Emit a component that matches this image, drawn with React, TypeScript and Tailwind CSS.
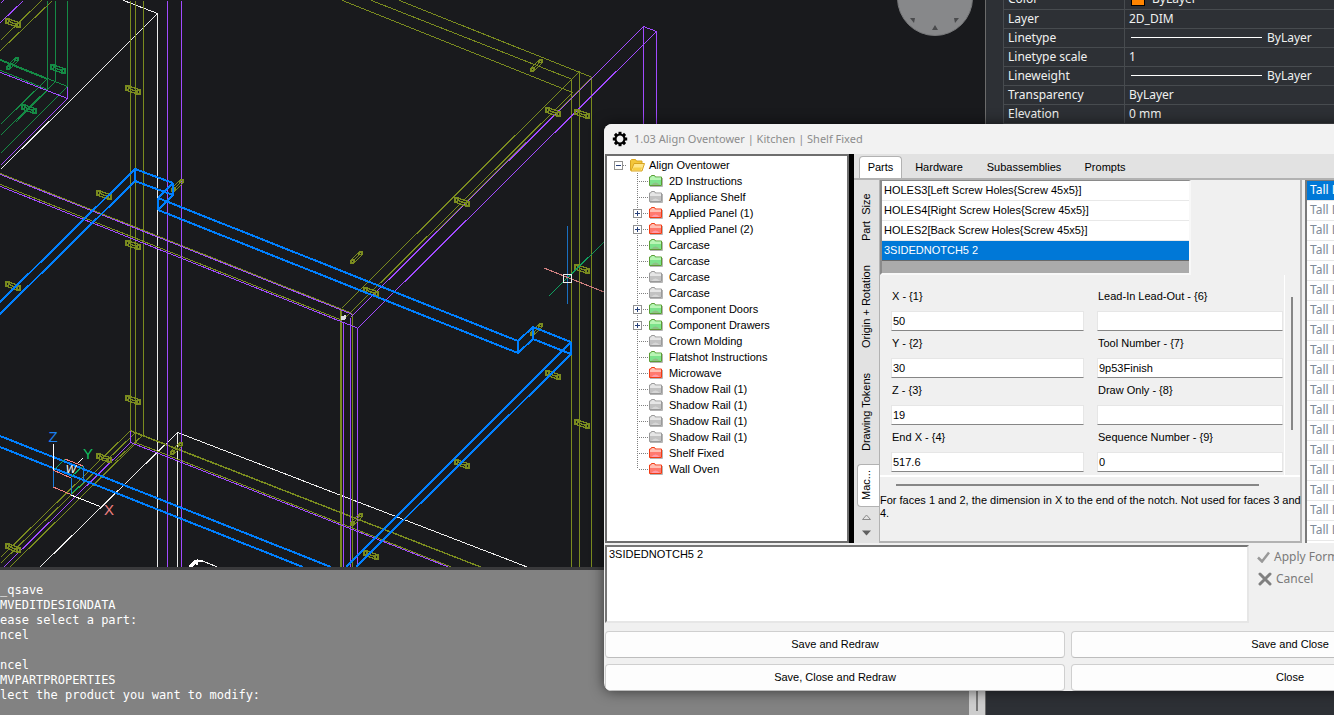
import type { ReactNode } from 'react';
import { clsx } from 'clsx';

type Tone = 'green' | 'gray' | 'red';
type Segment = [number, number, number, number];

const OLIVE = '#7a8b1f';
const PURPLE = '#a14bff';
const GREEN = '#158a45';

const treeItems: { label: string; tone: Tone; expandable?: boolean }[] = [
  { label: '2D Instructions', tone: 'green' },
  { label: 'Appliance Shelf', tone: 'gray' },
  { label: 'Applied Panel (1)', tone: 'red', expandable: true },
  { label: 'Applied Panel (2)', tone: 'red', expandable: true },
  { label: 'Carcase', tone: 'green' },
  { label: 'Carcase', tone: 'green' },
  { label: 'Carcase', tone: 'gray' },
  { label: 'Carcase', tone: 'gray' },
  { label: 'Component Doors', tone: 'green', expandable: true },
  { label: 'Component Drawers', tone: 'green', expandable: true },
  { label: 'Crown Molding', tone: 'gray' },
  { label: 'Flatshot Instructions', tone: 'green' },
  { label: 'Microwave', tone: 'red' },
  { label: 'Shadow Rail (1)', tone: 'gray' },
  { label: 'Shadow Rail (1)', tone: 'gray' },
  { label: 'Shadow Rail (1)', tone: 'gray' },
  { label: 'Shadow Rail (1)', tone: 'gray' },
  { label: 'Shelf Fixed', tone: 'red' },
  { label: 'Wall Oven', tone: 'red' },
];

const tokens = [
  'HOLES3[Left Screw Holes{Screw 45x5}]',
  'HOLES4[Right Screw Holes{Screw 45x5}]',
  'HOLES2[Back Screw Holes{Screw 45x5}]',
  '3SIDEDNOTCH5 2',
];

const fields = [
  { id: 'x', label: 'X - {1}', value: '50' },
  { id: 'lead', label: 'Lead-In Lead-Out - {6}', value: '' },
  { id: 'y', label: 'Y - {2}', value: '30' },
  { id: 'tool', label: 'Tool Number - {7}', value: '9p53Finish' },
  { id: 'z', label: 'Z - {3}', value: '19' },
  { id: 'draw', label: 'Draw Only - {8}', value: '' },
  { id: 'endx', label: 'End X - {4}', value: '517.6' },
  { id: 'seq', label: 'Sequence Number - {9}', value: '0' },
];

const commandLines = [
  '_qsave',
  'MVEDITDESIGNDATA',
  'ease select a part:',
  'ncel',
  '',
  'ncel',
  'MVPARTPROPERTIES',
  'lect the product you want to modify:',
];

const oliveLines: Segment[] = [
  [0, 40, 41, 0],
  [0, 50, 52, 0],
  [130, 0, 130, 430],
  [135, 0, 135, 442],
  [143, 0, 143, 434],
  [0, 173, 352, 313],
  [0, 184, 342, 320],
  [342, 0, 572, 92],
  [371, 0, 572, 79],
  [399, 0, 592, 77],
  [571, 79, 571, 567],
  [579, 71, 579, 567],
  [591, 77, 591, 567],
  [341, 308, 579, 71],
  [344, 318, 572, 92],
  [352, 315, 591, 77],
  [340, 308, 340, 567],
  [341, 308, 341, 567],
  [352, 313, 352, 567],
  [130, 430, 0, 557],
  [135, 432, 0, 563],
  [135, 443, 9, 567],
  [143, 434, 115, 460],
  [130, 430, 482, 567],
  [131, 431, 481, 567],
  [135, 442, 452, 567],
];

const purpleLines: Segment[] = [
  [0, 3, 3, 0],
  [0, 22, 23, 0],
  [67, 86, 67, 98],
  [0, 72, 67, 98],
  [0, 165, 67, 98],
  [167, 0, 167, 567],
  [181, 0, 181, 567],
  [0, 174, 352, 314],
  [0, 186, 358, 328],
  [350, 317, 592, 77],
  [592, 77, 643, 26],
  [357, 328, 656, 31],
  [643, 26, 656, 31],
  [643, 26, 643, 200],
  [656, 31, 656, 200],
  [343, 322, 343, 567],
  [350, 317, 350, 567],
  [357, 328, 357, 567],
  [130, 430, 130, 442],
  [130, 442, 3, 567],
  [130, 442, 449, 567],
];

const greenLines: Segment[] = [
  [47, 0, 47, 89],
  [55, 0, 55, 81],
  [67, 0, 67, 86],
  [0, 59, 67, 86],
  [0, 60, 47, 79],
  [0, 70, 47, 89],
  [0, 124, 47, 78],
  [0, 135, 55, 81],
  [15, 122, 47, 90],
  [0, 153, 67, 86],
];

const whiteLines: Segment[] = [
  [123, 0, 157, 13],
  [157, 13, 67, 103],
  [67, 103, 0, 169],
  [157, 13, 157, 567],
  [177, 432, 177, 567],
  [177, 432, 528, 567],
  [177, 432, 39, 567],
  [201, 560, 218, 567],
];

const blueLines: Segment[] = [
  [0, 302, 135, 169],
  [0, 314, 135, 181],
  [135, 169, 135, 181],
  [135, 169, 173, 183],
  [135, 181, 173, 195],
  [173, 183, 173, 195],
  [173, 183, 158, 198],
  [173, 195, 158, 210],
  [158, 198, 158, 210],
  [158, 198, 518, 341],
  [158, 210, 518, 353],
  [518, 341, 518, 353],
  [518, 341, 533, 327],
  [518, 353, 533, 339],
  [533, 327, 533, 339],
  [533, 327, 571, 342],
  [533, 339, 571, 354],
  [571, 342, 571, 354],
  [571, 342, 346, 567],
  [571, 354, 356, 567],
  [0, 436, 331, 567],
  [0, 447, 303, 567],
];

const dowelsDown = [
  [13, 23], [133, 90], [104, 195], [133, 245], [13, 286], [133, 400], [104, 458], [13, 548],
  [553, 112], [582, 114], [462, 202], [371, 292], [582, 269], [553, 375], [582, 424], [462, 464], [371, 555],
];
const dowelsUp = [[537, 65], [357, 257], [178, 185], [537, 329], [177, 448], [357, 519]];

const DOWEL_DOWN = 'M-7 -4h3l11 4v4h-3l-11 -4zM-4 -4v3l-2 1M7 0l-3 1v3M-3 -1l8 3';
const DOWEL_UP = 'M2 -5h3v3l-8 8h-3v-3zM2 -5v2l3 1M-6 3h3v3M-2 2l5 -5';

const Lines = ({ items, color, width = 1 }: { items: Segment[]; color: string; width?: number }) => {
  // one pixel strokes sit on pixel centres, two pixel strokes on pixel edges
  const shift = width % 2 ? 0.5 : 0;
  return (
    <g stroke={color} strokeWidth={width}>
      {items.map(([x1, y1, x2, y2], i) => (
        <line key={i} x1={x1 + shift} y1={y1 + shift} x2={x2 + shift} y2={y2 + shift} />
      ))}
    </g>
  );
};

const Dowels = ({ at, d, color }: { at: number[][]; d: string; color: string }) => (
  <g stroke={color} fill="none" strokeWidth={1.3}>
    {at.map(([x, y]) => (
      <path key={`${x}-${y}`} d={d} transform={`translate(${x} ${y})`} />
    ))}
  </g>
);

/** Wireframe of the cabinet with UCS icon, cursor and navigation wheel. */
const Wireframe = () => (
  <svg className="block h-full w-full" shapeRendering="crispEdges" aria-label="Model view">
    <Lines items={greenLines} color={GREEN} />
    <Lines items={whiteLines} color="#ececec" />
    <Lines items={oliveLines} color={OLIVE} />
    <Lines items={purpleLines} color={PURPLE} />
    <Dowels at={dowelsDown} d={DOWEL_DOWN} color={OLIVE} />
    <Dowels at={dowelsUp} d={DOWEL_UP} color={OLIVE} />
    <Dowels at={[[58, 69], [29, 109]]} d={DOWEL_DOWN} color={GREEN} />
    <Dowels at={[[13, 63]]} d={DOWEL_UP} color={GREEN} />
    <Lines items={blueLines} color="#0080ff" width={2} />

    <path d="M189 567l6 -6h8M191 567l6 -6v4" stroke="#fff" strokeWidth="2" fill="none" />
    <path d="M341 316h3v-1h2v4l-2 1h-3z" fill="#ddd" />

    <g fill="none">
      <path d="M53.5 444v26M71 495l29 11.5M77 464l6 -6" stroke="#fff" />
      <path d="M53.5 470v17M71.5 478v17M83.5 466v17" stroke="#1a80e0" />
      <path d="M53 487l18 7.5M53 470l18 8M65 459l18 7" stroke="#f08080" />
      <path d="M55 469l10 -10M71 477l12 -11M71 494l12 -11" stroke="#10b060" />
    </g>
    <g className="font-['Liberation_Sans'] text-[15px]" textAnchor="middle">
      <text x="53" y="442" fill="#1a80f0">Z</text>
      <text x="88" y="459" fill="#10c060">Y</text>
      <text x="109" y="515" fill="#f08080">X</text>
      <text x="71" y="473" fill="#fff" className="text-[11px] italic">W</text>
    </g>

    <path d="M567.5 226v78" stroke="#1a6fc0" />
    <path d="M549 296l55 -54" stroke="#10a060" />
    <path d="M544 268l60 24" stroke="#d08080" />
    <rect x="563.5" y="274.5" width="8" height="8" fill="none" stroke="#eee" />

    <g shapeRendering="auto">
      <circle cx="935" cy="-2" r="37.5" fill="#87888a" stroke="#77787a" />
      <path d="M935 25l3 5h-6zM910 18h5l-1 5zM959 18h-5l1 5z" fill="#4a4b4d" />
    </g>
  </svg>
);

const PropertyRow = ({ name, children }: { name: string; children: ReactNode }) => (
  <tr className="h-[19px] border-b border-[#474b4f]">
    <th scope="row" className="w-[121px] border-x border-[#474b4f] px-1 py-0 text-left font-normal">
      {name}
    </th>
    <td className="px-1 py-0">{children}</td>
  </tr>
);

const LineSample = () => (
  <div className="flex items-center gap-[5px] pl-0.5">
    <span className="h-px w-[131px] bg-white" />
    ByLayer
  </div>
);

const PropertiesPanel = () => (
  <aside className="w-[349px] shrink-0 border-l border-[#6b6b6b] bg-[#2d3035] pl-[17px]">
    <table className="-mt-2.5 w-full border-collapse font-['Noto_Sans',sans-serif] text-[12px] leading-[18px] text-[#f0f0f0]">
      <tbody>
        <PropertyRow name="Color">
          <div className="flex items-center gap-[7px] pl-0.5">
            <span className="size-3.5 border border-black bg-[#ff8400]" />
            ByLayer
          </div>
        </PropertyRow>
        <PropertyRow name="Layer">2D_DIM</PropertyRow>
        <PropertyRow name="Linetype">
          <LineSample />
        </PropertyRow>
        <PropertyRow name="Linetype scale">1</PropertyRow>
        <PropertyRow name="Lineweight">
          <LineSample />
        </PropertyRow>
        <PropertyRow name="Transparency">ByLayer</PropertyRow>
        <PropertyRow name="Elevation">0 mm</PropertyRow>
      </tbody>
    </table>
  </aside>
);

const folderColors = {
  green: { edge: '#5c9c35', top: '#b9f5b4', body: '#7de38c', glow: '#8fbf86' },
  gray: { edge: '#9a9a9a', top: '#e6e6e6', body: '#c2c2c2', glow: '#d6d6d6' },
  red: { edge: '#f23c14', top: '#ffc0b4', body: '#ff7a6e', glow: '#ff9aa8' },
};

const Folder = ({ tone }: { tone: Tone }) => {
  const c = folderColors[tone];
  return (
    <svg width="14" height="12" viewBox="0 0 14 12" aria-hidden="true">
      <path d="M1 11.500h12.500V3" stroke="#b5b5b5" fill="none" />
      <path d="M.5 10.500v-8.500h1l1 -1.500h3l1 1.500h6v8.500z" fill={c.body} stroke={c.edge} />
      <path d="M1 5V2.500h1l1 -1.500h2l1 1.500h6V5z" fill={c.top} />
      <path d="M2 10q4.500 -5 9 0z" fill={c.glow} />
    </svg>
  );
};

const OpenFolder = () => (
  <svg width="15" height="13" viewBox="0 0 15 13" aria-hidden="true">
    <path d="M.5 11.500V1.500l1 -1h4l1 1.500h5.500v3" fill="#f3c63a" stroke="#d9a520" />
    <path d="M1 12l3 -7.500h10.500L12 12z" fill="#ffe68a" stroke="#d9a520" />
    <path d="M2.500 11l1 -2.500h8.500l-1 2.500z" fill="#f7cf45" />
  </svg>
);

/** Dotted guide left of a tree item, with the plus box when it can be opened. */
const Branch = ({ last, expandable }: { last: boolean; expandable?: boolean }) => (
  <svg width="16" height="16" aria-hidden="true" shapeRendering="crispEdges">
    <g stroke="#808080" strokeDasharray="1 1">
      <path d={last ? 'M4.500 0v8' : 'M4.500 0v16'} />
      <path d="M6 8.500h9" />
    </g>
    {expandable && (
      <>
        <rect x=".5" y="4.500" width="8" height="8" fill="#fff" stroke="#919191" />
        <path d="M2 8.500h5M4.500 6v5" stroke="#27407a" />
      </>
    )}
  </svg>
);

const ProductTree = () => (
  <div className="w-[244px] shrink-0 border-2 border-[#6e6e6e] bg-white">
    <div className="flex h-[17px] items-center pt-px pl-[7px]">
      <button type="button" aria-label="Collapse Align Oventower" className="mr-[3px] flex">
        <svg width="13" height="9" shapeRendering="crispEdges" aria-hidden="true">
          <rect x=".5" y=".5" width="8" height="8" fill="#fff" stroke="#919191" />
          <path d="M2 4.500h5" stroke="#27407a" />
          <path d="M9 4.500h4" stroke="#808080" strokeDasharray="1 1" />
        </svg>
      </button>
      <OpenFolder />
      <span className="ml-1">Align Oventower</span>
    </div>
    <ul>
      {treeItems.map((item, i) => {
        const branch = <Branch last={i === treeItems.length - 1} expandable={item.expandable} />;
        return (
          <li key={i} className="flex h-4 items-center pl-[26px] leading-4">
            {item.expandable ? (
              <button type="button" aria-label={`Expand ${item.label}`} className="flex">
                {branch}
              </button>
            ) : (
              branch
            )}
            <Folder tone={item.tone} />
            <span className="ml-1.5">{item.label}</span>
          </li>
        );
      })}
    </ul>
  </div>
);

const SideTab = ({ children, className }: { children: string; className: string }) => (
  <button
    type="button"
    role="tab"
    className={clsx('flex rotate-180 items-center justify-center whitespace-nowrap [writing-mode:vertical-rl]', className)}
  >
    {children}
  </button>
);

const MachiningPanel = () => (
  <div className="flex w-[423px] shrink-0 flex-col border-r-2 border-b-2 border-l border-[#b2b2b2]">
    <ul className="h-[95px] w-[311px] border-2 border-t border-t-[#8a8a8a] border-r-[#f8f8f8] border-b-[#f8f8f8] border-l-[#8a8a8a] bg-[#ababab]">
      {tokens.map((token, i) => (
        <li
          key={token}
          className={clsx(
            'h-5 border-b pl-0.5 leading-[19px]',
            i === 3 ? 'border-[#696969] bg-[#0078d7] text-white' : 'border-[#e8e8e8] bg-white',
          )}
        >
          {token}
        </li>
      ))}
    </ul>
    <div className="flex h-[202px] border-b-2 border-white">
      <form className="grid h-full w-[405px] grid-cols-[193px_186px] content-start gap-x-[13px] gap-y-1 border-r border-white pt-[13px] pl-[11px]">
        {fields.map((field) => (
          <div key={field.id} className="flex flex-col gap-[7px]">
            <label htmlFor={field.id} className="h-4 pl-px leading-4">
              {field.label}
            </label>
            <input
              id={field.id}
              defaultValue={field.value}
              className="h-5 w-full border border-[#e6e6e6] border-b-[#868686] bg-white px-px"
            />
          </div>
        ))}
      </form>
      <div className="mt-[22px] ml-1.5 h-[133px] w-0.5 bg-[#868686]" />
    </div>
    <div className="mt-[7px] ml-4 h-0.5 w-[363px] bg-[#868686]" />
    <p className="mt-2 leading-[13px] whitespace-nowrap">
      For faces 1 and 2, the dimension in X to the end of the notch. Not used for faces 3 and
      <br />
      4.
    </p>
  </div>
);

const PartsArea = () => (
  <div className="flex min-w-0 flex-1 flex-col">
    <div role="tablist" className="flex h-[26px] items-end border-b-2 border-[#b2b2b2] bg-[#e2e2e2] pl-[5px]">
      <button
        type="button"
        role="tab"
        aria-selected="true"
        className="h-[22px] w-[43px] rounded-t border border-b-0 border-[#b2b2b2] bg-white"
      >
        Parts
      </button>
      <button type="button" role="tab" className="h-[22px] w-[74px]">Hardware</button>
      <button type="button" role="tab" className="h-[22px] w-[96px]">Subassemblies</button>
      <button type="button" role="tab" className="h-[22px] w-[66px]">Prompts</button>
    </div>
    <div className="flex min-h-0 flex-1">
      <div role="tablist" className="flex w-[25px] shrink-0 flex-col items-end bg-[#e2e2e2]">
        <SideTab className="h-[74px] w-[25px]">Part&nbsp; Size</SideTab>
        <SideTab className="h-[106px] w-[25px]">Origin + Rotation</SideTab>
        <SideTab className="h-[104px] w-[25px]">Drawing Tokens</SideTab>
        <SideTab className="h-[43px] w-[22px] rounded-r border border-l-0 border-[#b2b2b2] bg-white pl-1">Mac...</SideTab>
        <div className="flex w-full flex-col items-center gap-[10px] pt-[7px]">
          <button type="button" aria-label="Scroll up">
            <svg width="9" height="6" className="block"><path d="M.5 5.500L4.500 1l4 4.500z" fill="#e2e2e2" stroke="#8a8a8a" /></svg>
          </button>
          <button type="button" aria-label="Scroll down">
            <svg width="9" height="6" className="block"><path d="M0 .5h9L4.500 5.500z" fill="#606060" /></svg>
          </button>
        </div>
      </div>
      <MachiningPanel />
      <ul className="ml-[3px] flex-1 border-t border-l-2 border-[#7a7a7a] bg-white font-['Noto_Sans',sans-serif] text-[12px] text-[#7d8a98]">
        {Array.from({ length: 18 }, (_, i) => (
          <li
            key={i}
            className={clsx('h-5 border-b border-[#e8e8e8] pl-[3px] leading-[18px]', i === 0 && 'bg-[#0078d7] text-white')}
          >
            Tall L
          </li>
        ))}
      </ul>
    </div>
  </div>
);

const ActionButton = ({ children }: { children: string }) => (
  <button type="button" className="h-[27px] rounded border border-[#cfcfcf] border-b-[#bdbdbd] bg-[#fdfdfd]">
    {children}
  </button>
);

const PartDialog = () => (
  <section className="absolute top-[124px] left-[604px] w-[910px] overflow-hidden rounded-lg bg-[#f0f0f0] pl-px font-['Liberation_Sans',sans-serif] text-[11px] text-black shadow-[0_0_14px_rgba(0,0,0,0.6)]">
    <header className="-ml-px flex h-[30px] items-center gap-1.5 bg-[#f2f2f2] pl-2 font-['Noto_Sans',sans-serif] text-[11px] text-[#8c8c8c]">
      <svg width="16" height="16" viewBox="-8 -8 16 16" aria-hidden="true">
        <circle r="4.500" fill="none" stroke="#000" strokeWidth="2.200" />
        {[0, 45, 90, 135, 180, 225, 270, 315].map((angle) => (
          <rect key={angle} x="-1.500" y="-7.200" width="3" height="2.500" transform={`rotate(${angle})`} />
        ))}
      </svg>
      <h1>1.03 Align Oventower | Kitchen | Shelf Fixed</h1>
    </header>
    <div className="flex h-[389px]">
      <ProductTree />
      <div className="w-[5px] bg-black" />
      <PartsArea />
    </div>
    <div className="flex h-20 gap-2 pt-0.5">
      <textarea
        aria-label="Token formula"
        defaultValue="3SIDEDNOTCH5 2"
        className="w-[644px] resize-none border-2 border-t-[#767676] border-r-[#e6e6e6] border-b-[#e6e6e6] border-l-[#767676] bg-white px-0.5 leading-[15px]"
      />
      <div className="flex flex-col pt-px font-['Noto_Sans',sans-serif] text-[12px] leading-[22px] text-[#7a7a7a]">
        <button type="button" className="flex items-center gap-1">
          <svg width="13" height="12" aria-hidden="true">
            <path d="M1 6.500l4 4L12 1.500" fill="none" stroke="#999" strokeWidth="2.500" />
          </svg>
          Apply Format
        </button>
        <button type="button" className="flex items-center gap-1">
          <svg width="15" height="14" aria-hidden="true">
            <path d="M3 2l10 10M13 2L3 12" stroke="#808080" strokeWidth="3" strokeLinecap="round" />
          </svg>
          Cancel
        </button>
      </div>
    </div>
    <div className="grid grid-cols-[460px_438px] gap-x-1.5 gap-y-1.5 pt-2">
      <ActionButton>Save and Redraw</ActionButton>
      <ActionButton>Save and Close</ActionButton>
      <ActionButton>Save, Close and Redraw</ActionButton>
      <ActionButton>Close</ActionButton>
    </div>
  </section>
);

export default function App() {
  return (
    <main className="relative flex h-screen w-full overflow-hidden bg-[#191a1d]">
      <div className="flex min-w-0 flex-1 flex-col">
        <div className="min-h-0 flex-1 overflow-hidden">
          <Wireframe />
        </div>
        <div className="flex h-[148px] shrink-0 justify-between border-t-[3px] border-[#3a3a3c] bg-[#828282]">
          <pre className="pt-[13px] font-['DejaVu_Sans_Mono',monospace] text-[12px] leading-[15px] text-white">
            {commandLines.join('\n')}
          </pre>
          <div className="flex w-4 justify-center bg-[#cdcdcd] py-1">
            <div className="w-0.5 bg-[#777]" />
          </div>
        </div>
      </div>
      <PropertiesPanel />
      <PartDialog />
    </main>
  );
}
